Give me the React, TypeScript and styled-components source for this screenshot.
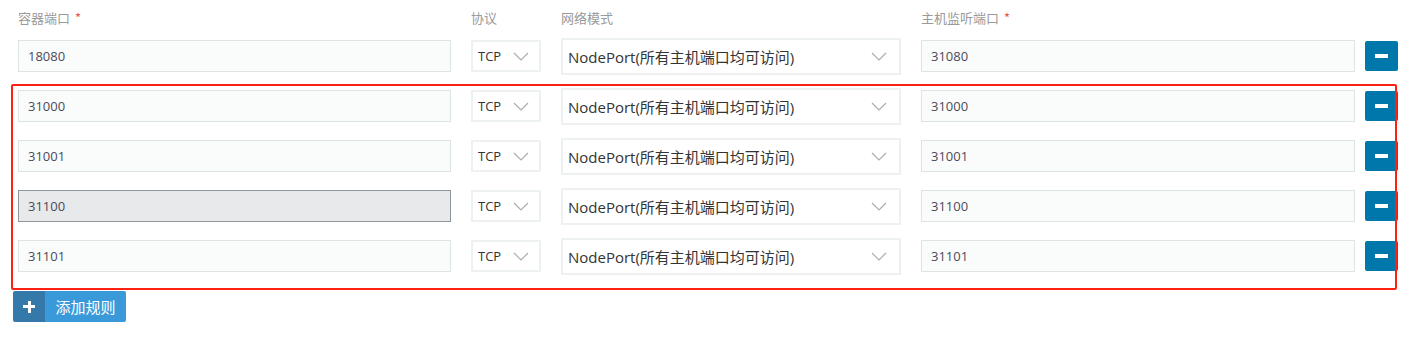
import React from 'react'
import { createGlobalStyle, styled } from 'styled-components'

const GlobalStyle = createGlobalStyle`
  html, body {
    margin: 0;
    padding: 0;
    background: #ffffff;
  }
  body {
    font-family: 'Open Sans', 'Noto Sans CJK SC', sans-serif;
    color: #333;
  }
`

const Page = styled.div`
  position: relative;
  padding: 9px 0 0 18px;
  width: 1419px;
  height: 337px;
  box-sizing: border-box;
`

const Grid = styled.div`
  display: grid;
  grid-template-columns: 433px 70px 340px 434px 33px;
  column-gap: 20px;
  align-items: center;
`

const Label = styled.div`
  font-family: 'Noto Sans CJK SC', sans-serif;
  font-size: 13px;
  color: #9a9a9a;
  height: 18px;
  line-height: 18px;
  margin-bottom: 4px;
`

const Star = styled.span`
  color: #f0524f;
  margin-left: 5px;
`

const Row = styled.div`
  display: contents;
`

const Cell = styled.div`
  height: 50px;
  display: flex;
  align-items: center;
`

const Input = styled.div<{ $disabled?: boolean }>`
  width: 100%;
  height: 32px;
  box-sizing: border-box;
  border: 1px solid ${(p) => (p.$disabled ? '#8d979c' : '#dde4e4')};
  background: ${(p) => (p.$disabled ? '#e8e9eb' : '#fafcfc')};
  padding-left: 9px;
  display: flex;
  align-items: center;
  font-size: 13px;
  color: #4a4a5a;
`

const Select = styled.div<{ $tall?: boolean }>`
  width: 100%;
  height: ${(p) => (p.$tall ? '37px' : '32px')};
  box-sizing: border-box;
  border: 2px solid #eef1f1;
  background: #ffffff;
  display: flex;
  align-items: center;
  justify-content: space-between;
  padding: 0 ${(p) => (p.$tall ? '12px' : '10px')} 0 5px;
  font-size: ${(p) => (p.$tall ? '15px' : '13px')};
  color: #333;
`

const Chevron = () => (
  <svg width="16" height="9" viewBox="0 0 16 9">
    <polyline points="1,1 8,8 15,1" fill="none" stroke="#a9adb0" strokeWidth="1.2" />
  </svg>
)

const MinusButton = styled.button`
  width: 33px;
  height: 30px;
  margin-left: -10px;
  border: none;
  border-radius: 2px;
  background: #0077aa;
  display: flex;
  align-items: center;
  justify-content: center;
  padding: 0;
  &::before {
    content: '';
    width: 13px;
    height: 4px;
    background: #ffffff;
  }
`

const AddButton = styled.button`
  margin-top: 10px;
  margin-left: -5px;
  display: flex;
  height: 31px;
  padding: 0;
  border: none;
  border-radius: 2px;
  overflow: hidden;
  font-family: 'Noto Sans CJK SC', sans-serif;
  font-size: 15px;
  color: #ffffff;
`

const AddIcon = styled.span`
  width: 32px;
  background: #3479a9;
  display: flex;
  align-items: center;
  justify-content: center;
  &::before {
    content: '';
    width: 12px;
    height: 12px;
    background:
      linear-gradient(#fff, #fff) center / 12px 3px no-repeat,
      linear-gradient(#fff, #fff) center / 3px 12px no-repeat;
  }
`

const AddText = styled.span`
  width: 81px;
  background: #3a9ad9;
  display: flex;
  align-items: center;
  justify-content: center;
`

const Highlight = styled.div`
  position: absolute;
  left: 11px;
  top: 84px;
  width: 1386px;
  height: 206px;
  box-sizing: border-box;
  border: 2px solid #ff2014;
  border-radius: 2px;
  pointer-events: none;
`

const rules = [
  { container: '18080', host: '31080' },
  { container: '31000', host: '31000' },
  { container: '31001', host: '31001' },
  { container: '31100', host: '31100', disabled: true },
  { container: '31101', host: '31101' },
]

export default function App() {
  return (
    <>
      <GlobalStyle />
      <Page>
        <Grid>
          <Label>
            容器端口<Star>*</Star>
          </Label>
          <Label>协议</Label>
          <Label>网络模式</Label>
          <Label>
            主机监听端口<Star>*</Star>
          </Label>
          <div />
          {rules.map((r) => (
            <Row key={r.container}>
              <Cell>
                <Input $disabled={r.disabled}>{r.container}</Input>
              </Cell>
              <Cell>
                <Select>
                  TCP
                  <Chevron />
                </Select>
              </Cell>
              <Cell>
                <Select $tall>
                  NodePort(所有主机端口均可访问)
                  <Chevron />
                </Select>
              </Cell>
              <Cell>
                <Input>{r.host}</Input>
              </Cell>
              <Cell>
                <MinusButton aria-label="删除" />
              </Cell>
            </Row>
          ))}
        </Grid>
        <AddButton>
          <AddIcon />
          <AddText>添加规则</AddText>
        </AddButton>
        <Highlight />
      </Page>
    </>
  )
}
